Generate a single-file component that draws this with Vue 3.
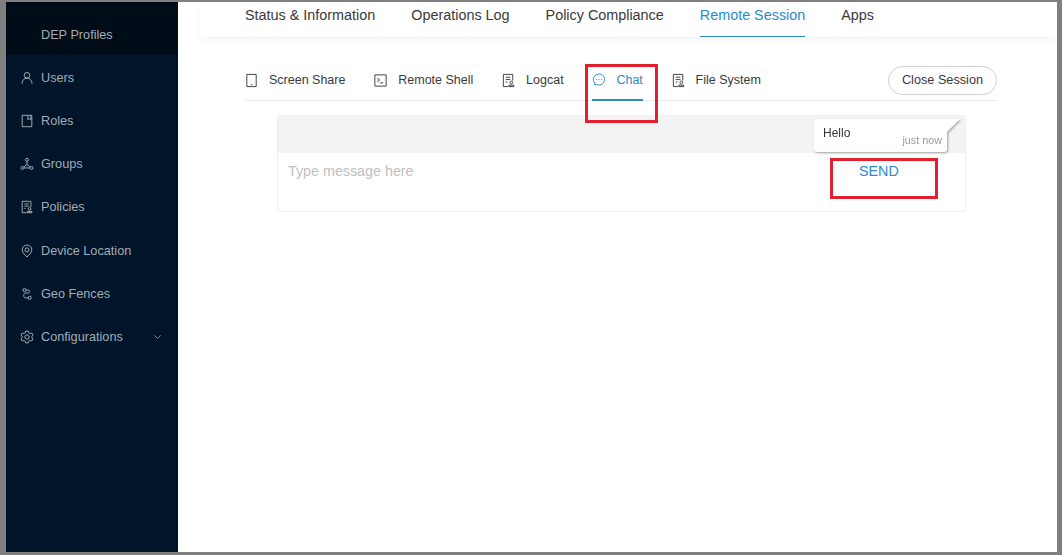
<script setup>
const docIcon = 'M7.5 14.5H2.500V1.500H12.500V8M5 4.500h5M5 7h5M5 9.500h1.800M11 8.600a1.500 1.500 0 1 1 0 3 1.500 1.500 0 0 1 0-3zM8.300 14.500v-1.500h5.400v1.500z'
const nav = [
  { label: 'Users', d: 'M8 1.700a3.200 3.200 0 1 1 0 6.400 3.200 3.200 0 0 1 0-6.400zM2.300 14.500c0-3.700 2.300-6.400 5.700-6.400s5.700 2.700 5.700 6.400' },
  { label: 'Roles', d: 'M2.500 1.500h11v13h-11zM9 1.500v5l1.700-1.200 1.700 1.200v-5' },
  { label: 'Groups', d: 'M8 1.500a1.700 1.700 0 1 1 0 3.400 1.700 1.700 0 0 1 0-3.400zM2.800 10.800a1.700 1.700 0 1 1 0 3.400 1.700 1.700 0 0 1 0-3.400zM13.200 10.800a1.700 1.700 0 1 1 0 3.400 1.700 1.700 0 0 1 0-3.400zM8 4.900v3.700M8 8.600l-3.900 3M8 8.600l3.900 3M4.500 12.500h7' },
  { label: 'Policies', d: docIcon },
  { label: 'Device Location', d: 'M8 14.800C4.500 11.700 2.500 9.200 2.500 6.700a5.500 5.500 0 0 1 11 0c0 2.500-2 5-5.500 8.100zM8 4.400a2.300 2.300 0 1 1 0 4.600 2.300 2.300 0 0 1 0-4.600z' },
  { label: 'Geo Fences', d: 'M5 1.700a1.800 1.800 0 1 1 0 3.600 1.800 1.800 0 0 1 0-3.600zM11 10.600a1.800 1.800 0 1 1 0 3.600 1.800 1.800 0 0 1 0-3.600zM6.800 3.500h2.700c1.800 0 1.800 3.400 0 3.400H6c-2.300 0-2.300 5.500 0 5.500h3.200' },
  { label: 'Configurations', d: 'M6.500 1.200h3l.4 1.900 1.600.9 1.900-.6 1.500 2.600-1.400 1.300v1.400l1.400 1.300-1.500 2.600-1.900-.6-1.600.9-.4 1.900h-3l-.4-1.900-1.600-.9-1.900.6-1.500-2.600 1.400-1.300V7.300L1.100 6l1.500-2.600 1.900.6 1.600-.9zM8 5.500a2.500 2.500 0 1 1 0 5 2.500 2.500 0 0 1 0-5z', chevron: true }
]
const topTabs = ['Status & Information', 'Operations Log', 'Policy Compliance', 'Remote Session', 'Apps']
const subTabs = [
  { label: 'Screen Share', d: 'M3 1.500h10v13H3zM7.200 12.500h1.600' },
  { label: 'Remote Shell', d: 'M2 2h12v12H2zM4.500 5.500l2.500 2-2.500 2M7.500 10.500h3.500' },
  { label: 'Logcat', d: docIcon },
  { label: 'Chat', d: 'M8.500 2a6 6 0 1 1-3 11.200l-1.800.6.500-1.700A6 6 0 0 1 8.500 2zM5.500 8h1M8 8h1M10.500 8h1', active: true },
  { label: 'File System', d: docIcon }
]
</script>

<template>
  <div class="frame">
    <aside class="sidebar">
      <div class="brand">DEP Profiles</div>
      <nav class="nav">
        <div v-for="item in nav" :key="item.label" class="nav-item">
          <svg class="nav-icon" viewBox="0 0 16 16"><path :d="item.d" /></svg>
          <span class="nav-label">{{ item.label }}</span>
          <svg v-if="item.chevron" class="chevron" viewBox="0 0 10 6"><path d="M1.500 1.200 5 4.600l3.500-3.400" /></svg>
        </div>
      </nav>
    </aside>
    <main class="main">
      <header class="topbar">
        <div v-for="(tab, i) in topTabs" :key="tab" class="top-tab" :class="{ on: i === 3 }">{{ tab }}</div>
      </header>
      <section class="content">
        <div class="subtabs">
          <div v-for="tab in subTabs" :key="tab.label" class="sub-tab" :class="{ on: tab.active }">
            <svg class="sub-icon" viewBox="0 0 16 16"><path :d="tab.d" /></svg>
            <span>{{ tab.label }}</span>
          </div>
          <button class="close">Close Session</button>
        </div>
        <div class="chat">
          <div class="chat-head">
            <div class="bubble">
              <span class="hello">Hello</span>
              <span class="time">just now</span>
              <i class="tail"></i>
            </div>
          </div>
          <div class="chat-body">
            <span class="placeholder">Type message here</span>
            <span class="send">SEND</span>
          </div>
        </div>
      </section>
      <div class="mark mark-chat"></div>
      <div class="mark mark-send"></div>
    </main>
  </div>
</template>

<style>
html, body { margin: 0; padding: 0; background: #fff; }
</style>

<style scoped>
.frame {
  box-sizing: border-box;
  width: 1062px;
  height: 555px;
  display: flex;
  overflow: hidden;
  border-style: solid;
  border-color: #808080;
  border-width: 2px 5px 3px 6px;
  font-family: "Liberation Sans", Arial, sans-serif;
  background: #fff;
}
.sidebar {
  width: 172px;
  flex: none;
  background: #001529;
}
.brand {
  height: 53px;
  box-sizing: border-box;
  padding: 26px 0 0 35px;
  font-size: 12.700px;
  line-height: 15px;
  color: #a3acb5;
  background: #000c17;
}
.nav {
  padding-top: 1px;
}
.nav-item {
  height: 43.250px;
  display: flex;
  align-items: center;
  padding-left: 14px;
  color: #a3acb5;
  font-size: 12.700px;
}
.nav-icon {
  width: 14px;
  height: 14px;
  margin-right: 7px;
  fill: none;
  stroke: #b4bbc2;
  stroke-width: 1;
}
.chevron {
  width: 9px;
  height: 6px;
  margin-left: 30px;
  fill: none;
  stroke: #8a949e;
  stroke-width: 1;
}
.main {
  flex: 1;
  position: relative;
  min-width: 0;
}
.topbar {
  height: 35px;
  margin-left: 22px;
  padding-left: 45px;
  display: flex;
  gap: 36px;
  box-shadow: 0 3px 8px -2px rgba(0, 0, 0, 0.07);
}
.top-tab {
  height: 35px;
  box-sizing: border-box;
  padding-top: 5px;
  font-size: 14.380px;
  line-height: 16px;
  color: #3a3a3a;
}
.top-tab.on {
  color: #2a8bc9;
  border-bottom: 1px solid #2a8bc9;
}
.content {
  padding: 29px 60px 0 67px;
}
.subtabs {
  height: 34px;
  display: flex;
  align-items: flex-start;
  border-bottom: 1px solid #ececec;
  position: relative;
}
.sub-tab {
  height: 34px;
  box-sizing: border-box;
  display: flex;
  align-items: center;
  padding-bottom: 6px;
  margin-right: 28.800px;
  font-size: 12.500px;
  color: #3a3a3a;
}
.sub-tab.on {
  color: #2a8bc9;
  border-bottom: 2px solid #2a8bc9;
  height: 35px;
}
.sub-icon {
  width: 15px;
  height: 15px;
  margin-right: 10px;
  margin-left: -1px;
  fill: none;
  stroke: currentColor;
  stroke-width: 1;
}
.close {
  position: absolute;
  right: 0;
  top: 0;
  width: 109px;
  height: 29px;
  padding: 0 0 2px;
  background: #fff;
  border: 1px solid #cfcfcf;
  border-radius: 15px;
  font: 12.700px "Liberation Sans", Arial, sans-serif;
  color: #3a3a3a;
}
.chat {
  margin: 14px 31px 0 32px;
  height: 97px;
  box-sizing: border-box;
  border: 1px solid #f0f0f0;
  border-radius: 3px;
}
.chat-head {
  height: 37px;
  background: #f3f3f3;
  position: relative;
}
.bubble {
  position: absolute;
  left: 536px;
  top: 3px;
  width: 133px;
  height: 33px;
  box-sizing: border-box;
  background: #fff;
  border-radius: 3px 0 3px 3px;
  filter: drop-shadow(1px 1px 1px rgba(0, 0, 0, 0.35));
}
.hello {
  position: absolute;
  left: 9px;
  top: 7px;
  font-size: 12px;
  line-height: 14px;
  color: #333;
}
.time {
  position: absolute;
  right: 5px;
  top: 15px;
  font-size: 10.800px;
  line-height: 12px;
  color: #9a9a9a;
}
.tail {
  position: absolute;
  left: 100%;
  top: 0;
  width: 0;
  height: 0;
  border-style: solid;
  border-width: 13px 13px 0 0;
  border-color: #fff transparent transparent transparent;
}
.chat-body {
  position: relative;
  height: 58px;
}
.placeholder {
  position: absolute;
  left: 10px;
  top: 10px;
  font-size: 14.300px;
  line-height: 16px;
  color: #bfbfbf;
}
.send {
  position: absolute;
  left: 581px;
  top: 10px;
  font-size: 14.300px;
  line-height: 16px;
  color: #2a8bc9;
}
.mark {
  position: absolute;
  box-sizing: border-box;
  border: 3px solid #e0202c;
  pointer-events: none;
}
.mark-chat { left: 407px; top: 62px; width: 73px; height: 59px; }
.mark-send { left: 652px; top: 156px; width: 108px; height: 41px; }
</style>
